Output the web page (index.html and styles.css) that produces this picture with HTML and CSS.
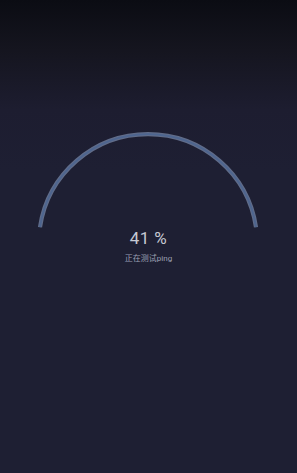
FILE: index.html
```html
<!DOCTYPE html>
<html lang="zh-CN">
<head>
  <meta charset="UTF-8">
  <meta name="viewport" content="width=device-width, initial-scale=1.0">
  <title>Ping 测试</title>
  <link rel="stylesheet" href="styles.css">
</head>
<body>
  <div class="screen">
    <div class="gauge">
      <svg class="gauge-arc" width="297" height="108" viewBox="0 0 297 108">
        <path class="arc-outer" d="M 40 103.2 A 109.2 109.2 0 0 1 256 103.2" />
        <path class="arc-inner" d="M 40 103.2 A 109.2 109.2 0 0 1 256 103.2" />
      </svg>
      <div class="gauge-value">41 %</div>
      <div class="gauge-label">正在测试ping</div>
    </div>
  </div>
</body>
</html>
```

FILE: styles.css
```css
html, body {
  margin: 0;
  padding: 0;
}
body {
  width: 297px;
  height: 473px;
  overflow: hidden;
  font-family: Roboto, 'Noto Sans CJK SC', sans-serif;
  background: linear-gradient(to bottom, #0b0c13 0px, #15151f 50px, #1d1d30 110px, #1e1f33 170px, #1e1f33 100%);
}
.screen {
  display: flex;
  flex-direction: column;
  align-items: center;
  padding-top: 124px;
}
.gauge {
  display: flex;
  flex-direction: column;
  align-items: center;
}
.gauge-arc {
  display: block;
}
.arc-outer {
  fill: none;
  stroke: #606c89;
  stroke-width: 4.2;
}
.arc-inner {
  fill: none;
  stroke: #4d6590;
  stroke-width: 1.8;
}
.gauge-value {
  margin-top: -4px;
  font-size: 17px;
  line-height: 20px;
  color: #c6c9d3;
  letter-spacing: 0.4px;
}
.gauge-label {
  margin-top: 6px;
  font-size: 8px;
  line-height: 10px;
  color: #9c9fb2;
}
```
